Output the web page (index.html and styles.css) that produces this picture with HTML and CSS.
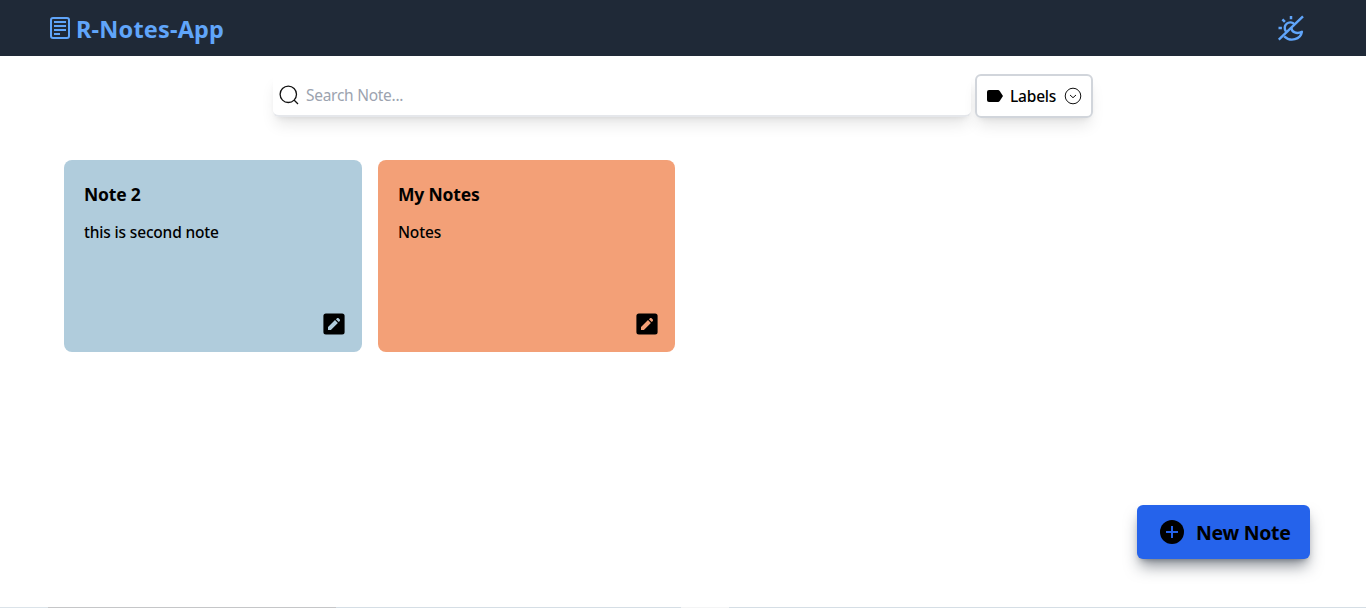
FILE: index.html
```html
<!DOCTYPE html>
<html lang="en">
<head>
<meta charset="utf-8">
<title>R-Notes-App</title>
<link rel="stylesheet" href="styles.css">
</head>
<body>
<div class="page">
  <header class="navbar">
    <div class="brand">
      <svg class="brand-icon" width="20" height="22" viewBox="0 0 20 22" fill="none" stroke="currentColor" stroke-width="2"><rect x="1" y="1" width="18" height="20" rx="2"/><path d="M4 5h12M4 9h12M4 13h12M4 17h6"/></svg>
      <span class="brand-name">R-Notes-App</span>
    </div>
    <svg class="theme-icon" width="28" height="28" viewBox="0 0 28 28" fill="none" stroke="currentColor" stroke-width="2.4"><path d="M1.800 25.700 26 2.300"/><path d="M9 17.500A5.500 5.500 0 0 1 17.600 10.400"/><path d="M14.300 13.800C14.800 18 19.500 20.600 24.900 17.700C23.600 25.600 13.500 28.300 7.200 22.300" stroke-linejoin="round"/><path d="M14 2v3.200M5.400 5.400l2.500 2.500M1.500 14h3.400" stroke-width="2.500"/></svg>
  </header>
  <main class="content">
    <div class="toolbar">
      <div class="search">
        <svg width="20" height="20" viewBox="0 0 20 20" fill="none" stroke="#111" stroke-width="1.3"><circle cx="9.3" cy="9.3" r="8.2"/><path d="m15 15 4 4"/></svg>
        <span class="search-hint">Search Note...</span>
      </div>
      <div class="labels">
        <svg width="16" height="12" viewBox="0 0 16 12"><path d="M2 0h9c.7 0 1.300.3 1.700.9L16 6l-3.300 5.100c-.4.6-1 .9-1.700.9H2a2 2 0 0 1-2-2V2a2 2 0 0 1 2-2z"/></svg>
        <span class="labels-text">Labels</span>
        <svg class="chevron" width="18" height="18" viewBox="0 0 18 18" fill="none" stroke="#111"><circle cx="9" cy="9" r="7.800"/><path d="m6 8 3 2.700L12 8"/></svg>
      </div>
    </div>
    <section class="notes">
      <article class="note note-blue">
        <h2 class="note-title">Note 2</h2>
        <p class="note-text">this is second note</p>
        <svg class="edit" width="22" height="22" viewBox="0 0 22 22"><rect x=".4" y=".4" width="21.200" height="21.200" rx="2.500"/><path class="pencil" d="M5 14.100 12 7.100l2.900 2.900-7 7H5zM12.900 6.300l.9-.9c.6-.6 1.400-.6 2 0l.8.8c.6.6.6 1.400 0 2l-.9.9z"/></svg>
      </article>
      <article class="note note-orange">
        <h2 class="note-title">My Notes</h2>
        <p class="note-text">Notes</p>
        <svg class="edit" width="22" height="22" viewBox="0 0 22 22"><rect x=".4" y=".4" width="21.200" height="21.200" rx="2.500"/><path class="pencil" d="M5 14.100 12 7.100l2.900 2.900-7 7H5zM12.900 6.300l.9-.9c.6-.6 1.400-.6 2 0l.8.8c.6.6.6 1.400 0 2l-.9.9z"/></svg>
      </article>
    </section>
  </main>
  <div class="actions">
    <div class="new-note">
      <svg width="24" height="24" viewBox="0 0 24 24"><circle cx="12" cy="12" r="12"/><path d="M12 6v12M6 12h12" stroke="#2563eb" stroke-width="2"/></svg>
      <span class="new-note-text">New Note</span>
    </div>
  </div>
  <div class="edge"><i class="edge-start"></i><i class="edge-dark"></i><i class="edge-mid"></i><i class="edge-gap"></i><i class="edge-end"></i></div>
</div>
</body>
</html>
```
FILE: styles.css
```css
* { box-sizing: border-box; margin: 0; }
body { font-family: "Noto Sans", "Open Sans", sans-serif; color: #000; background: #fff; }
svg { display: block; flex: none; }
span, h2, p { white-space: nowrap; }
.page { height: 608px; display: flex; flex-direction: column; overflow: hidden; }
.navbar { height: 56px; flex: none; padding: 0 61px 0 50px; display: flex; align-items: center; justify-content: space-between; background: #1f2937; color: #60a5fa; }
.brand { display: flex; align-items: center; gap: 6px; }
.brand-name { font-size: 23.5px; line-height: 32px; font-weight: 700; padding-top: 2px; letter-spacing: .17px; }
.content { flex: 1; padding: 18px 64px 0; }
.toolbar { display: flex; gap: 4px; margin-left: 209px; height: 44px; }
.search { width: 698px; height: 43px; padding-left: 6px; display: flex; align-items: center; gap: 6px; border-radius: 6px; border-bottom: 2px solid #e5e7eb; box-shadow: 0 10px 15px -3px rgba(0,0,0,.1), 0 4px 6px -4px rgba(0,0,0,.1); }
.search-hint { font-size: 15.5px; line-height: 24px; letter-spacing: -.28px; color: #9ca3af; padding: 1px 0 0 1px; }
.labels { width: 118px; height: 44px; padding-left: 10px; display: flex; align-items: center; border: 2px solid #d1d5db; border-radius: 6px; box-shadow: 0 10px 15px -3px rgba(0,0,0,.1), 0 4px 6px -4px rgba(0,0,0,.1); }
.labels-text { font-size: 15.5px; font-weight: 500; letter-spacing: -.2px; width: 54px; margin-left: 7px; }
.notes { display: grid; grid-template-columns: 298px 297px; gap: 16px; margin-top: 42px; }
.note { height: 192px; border-radius: 8px; padding: 20px 17px 17px 20px; display: flex; flex-direction: column; }
.note-blue { background: #b0ccdc; }
.note-orange { background: #f3a077; }
.note-title { font-size: 17.5px; line-height: 28px; font-weight: 700; letter-spacing: -.18px; }
.note-text { font-size: 15.5px; line-height: 24px; font-weight: 500; letter-spacing: -.17px; margin-top: 12px; }
.edit { margin: auto 0 0 auto; }
.note-blue .pencil { fill: #b0ccdc; }
.note-orange .pencil { fill: #f3a077; }
.actions { display: flex; justify-content: flex-end; padding: 0 56px 48px 0; }
.new-note { width: 173px; height: 54px; padding-left: 23px; display: flex; align-items: center; gap: 12px; background: #2563eb; border-radius: 6px; box-shadow: 0 10px 15px -3px rgba(31,41,55,.5), 0 4px 6px -4px rgba(31,41,55,.5); }
.new-note-text { font-size: 19.5px; line-height: 28px; font-weight: 700; letter-spacing: -.3px; padding-top: 2px; }
.edge { display: flex; height: 1px; flex: none; }
.edge-start { width: 48px; background: #dbe3e9; }
.edge-dark { width: 288px; background: #c5c6c8; }
.edge-mid { width: 345px; background: #d5dee5; }
.edge-gap { width: 48px; background: #f3f4f5; }
.edge-end { flex: 1; background: #d5dee5; }
```
